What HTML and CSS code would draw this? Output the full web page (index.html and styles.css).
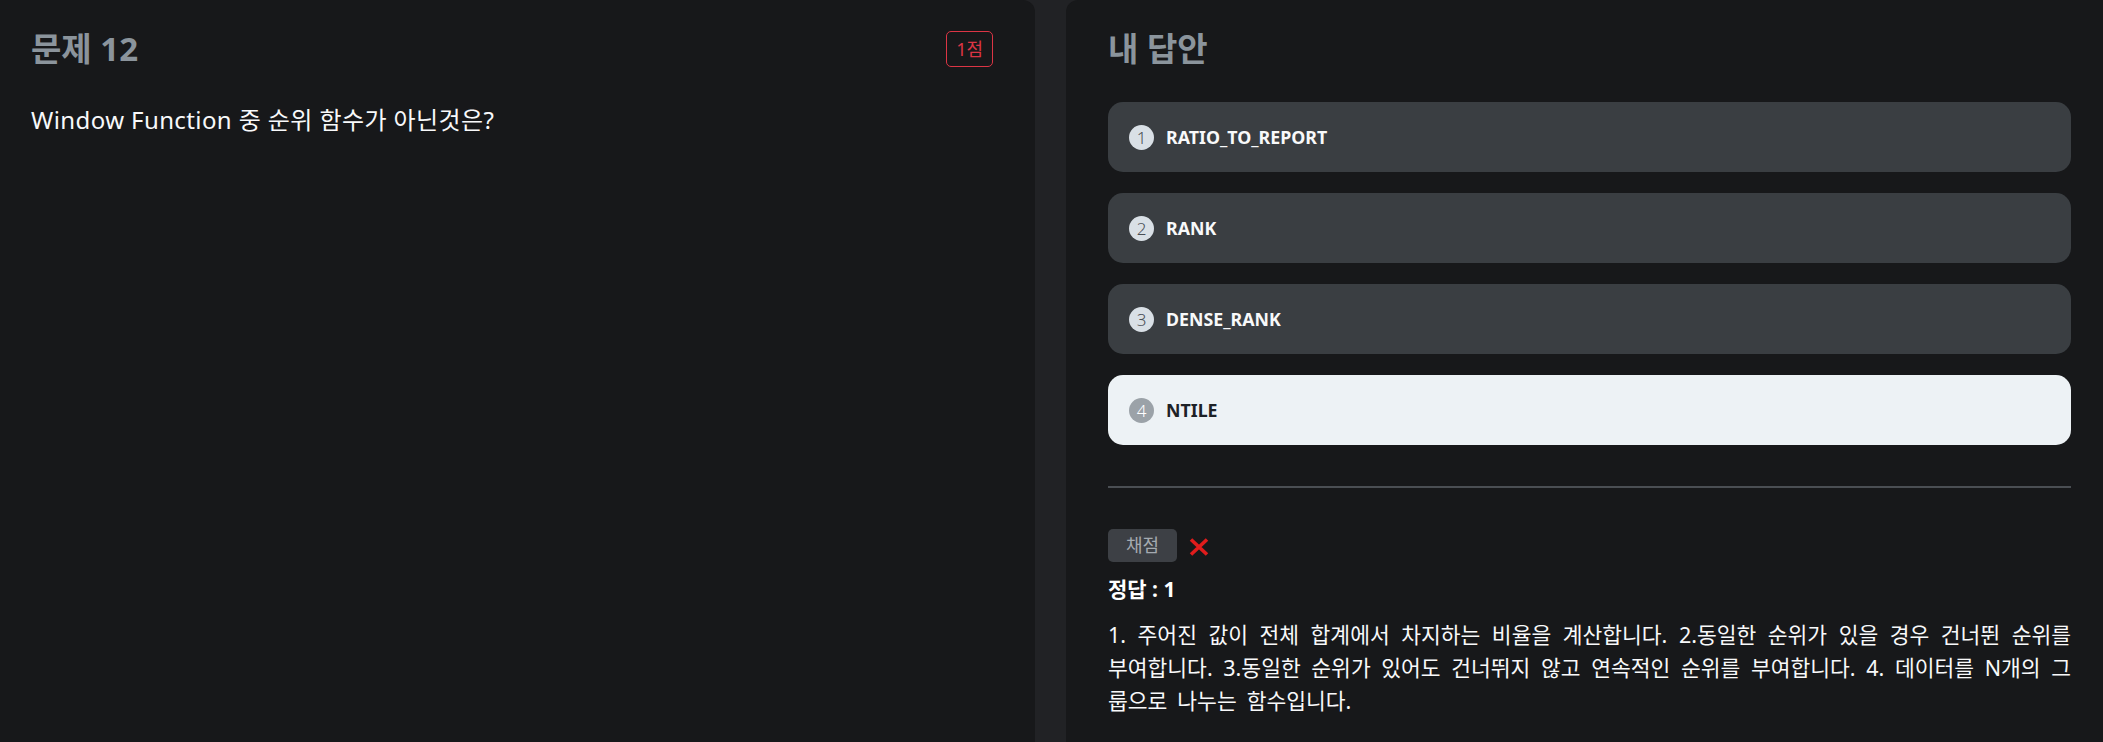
FILE: index.html
```html
<!DOCTYPE html>
<html lang="ko">
<head>
<meta charset="utf-8">
<title>문제 12</title>
<link rel="stylesheet" href="styles.css">
</head>
<body>
<div class="layout">
  <section class="panel panel-question">
    <header class="panel-head">
      <h2 class="panel-title">문제 12</h2>
      <span class="score-badge">1점</span>
    </header>
    <p class="question-text">Window Function 중 순위 함수가 아닌것은?</p>
  </section>

  <section class="panel panel-answer">
    <header class="panel-head">
      <h2 class="panel-title">내 답안</h2>
    </header>
    <ol class="choices">
      <li class="choice"><span class="choice-num">1</span><span class="choice-label">RATIO_TO_REPORT</span></li>
      <li class="choice"><span class="choice-num">2</span><span class="choice-label">RANK</span></li>
      <li class="choice"><span class="choice-num">3</span><span class="choice-label">DENSE_RANK</span></li>
      <li class="choice is-selected"><span class="choice-num">4</span><span class="choice-label">NTILE</span></li>
    </ol>
    <hr class="divider">
    <div class="grade-row">
      <button class="grade-btn" type="button">채점</button>
      <svg class="wrong-mark" width="20" height="18" viewBox="0 0 20 18" aria-label="오답">
        <path d="M2 1.5 L18 16.5 M18 1.5 L2 16.5" stroke="#e01c1c" stroke-width="3.6" stroke-linecap="butt" fill="none"/>
      </svg>
    </div>
    <p class="answer-key">정답 : 1</p>
    <p class="explanation">1. 주어진 값이 전체 합계에서 차지하는 비율을 계산합니다. 2.동일한 순위가 있을 경우 건너뛴 순위를 부여합니다. 3.동일한 순위가 있어도 건너뛰지 않고 연속적인 순위를 부여합니다. 4. 데이터를 N개의 그룹으로 나누는 함수입니다.</p>
  </section>
</div>
</body>
</html>
```

FILE: styles.css
```css
* {
  box-sizing: border-box;
}

html, body {
  margin: 0;
  padding: 0;
}

body {
  background: #212225;
  color: #f8f9fa;
  font-family: "Noto Sans", "Noto Sans CJK KR", sans-serif;
  overflow: hidden;
}

.layout {
  display: grid;
  grid-template-columns: 1035px 1fr;
  column-gap: 31px;
  min-height: 742px;
}

.panel {
  background: #17181a;
  min-height: 742px;
  padding-top: 29px;
}

.panel-question {
  border-radius: 0 12px 0 0;
  padding-left: 31px;
  padding-right: 42px;
}

.panel-answer {
  border-radius: 12px 0 0 0;
  padding-left: 42px;
  padding-right: 32px;
}

.panel-head {
  display: flex;
  align-items: center;
  justify-content: space-between;
  min-height: 40px;
}

.panel-title {
  margin: 0;
  font-size: 33px;
  line-height: 40px;
  font-weight: 700;
  color: #8b949c;
}

.score-badge {
  display: inline-block;
  border: 1px solid #dc3545;
  border-radius: 5px;
  color: #dc3545;
  font-size: 18px;
  line-height: 26px;
  padding: 4px 9px;
}

.question-text {
  margin: 34px 0 0;
  font-size: 24px;
  line-height: 34px;
  letter-spacing: 0.4px;
  color: #f8f9fa;
}

.choices {
  list-style: none;
  margin: 33px 0 0;
  padding: 0;
  display: flex;
  flex-direction: column;
  gap: 21px;
}

.choice {
  display: flex;
  align-items: center;
  gap: 12px;
  height: 70px;
  padding: 0 21px;
  background: #3a3e42;
  border-radius: 15px;
  color: #f8f9fa;
}

.choice-num {
  flex: none;
  width: 25px;
  height: 25px;
  border-radius: 50%;
  background: #d9e0e6;
  color: #4a4f55;
  font-size: 17px;
  font-weight: 300;
  line-height: 25px;
  text-align: center;
}

.choice-label {
  font-size: 17.8px;
  font-weight: 700;
  line-height: 24px;
}

.choice.is-selected {
  background: #edf2f5;
  color: #1d2126;
}

.choice.is-selected .choice-num {
  background: #9ba2a8;
  color: #ffffff;
}

.divider {
  margin: 41px 0 0;
  border: 0;
  height: 2px;
  background: #4a4e53;
}

.grade-row {
  display: flex;
  align-items: center;
  gap: 12px;
  margin-top: 41px;
}

.grade-btn {
  height: 33px;
  padding: 0 18px;
  border: 0;
  border-radius: 5px;
  background: #3d4045;
  color: #a4aab0;
  font-family: "Noto Sans", "Noto Sans CJK KR", sans-serif;
  font-size: 18px;
  line-height: 33px;
}

.wrong-mark {
  display: block;
  margin-top: 2px;
}

.answer-key {
  margin: 12px 0 0;
  font-size: 21px;
  font-weight: 700;
  line-height: 30px;
  color: #ffffff;
}

.explanation {
  margin: 14px 0 0;
  font-size: 21.5px;
  line-height: 33px;
  word-spacing: 4.4px;
  text-align: justify;
  color: #f8f9fa;
}
```
